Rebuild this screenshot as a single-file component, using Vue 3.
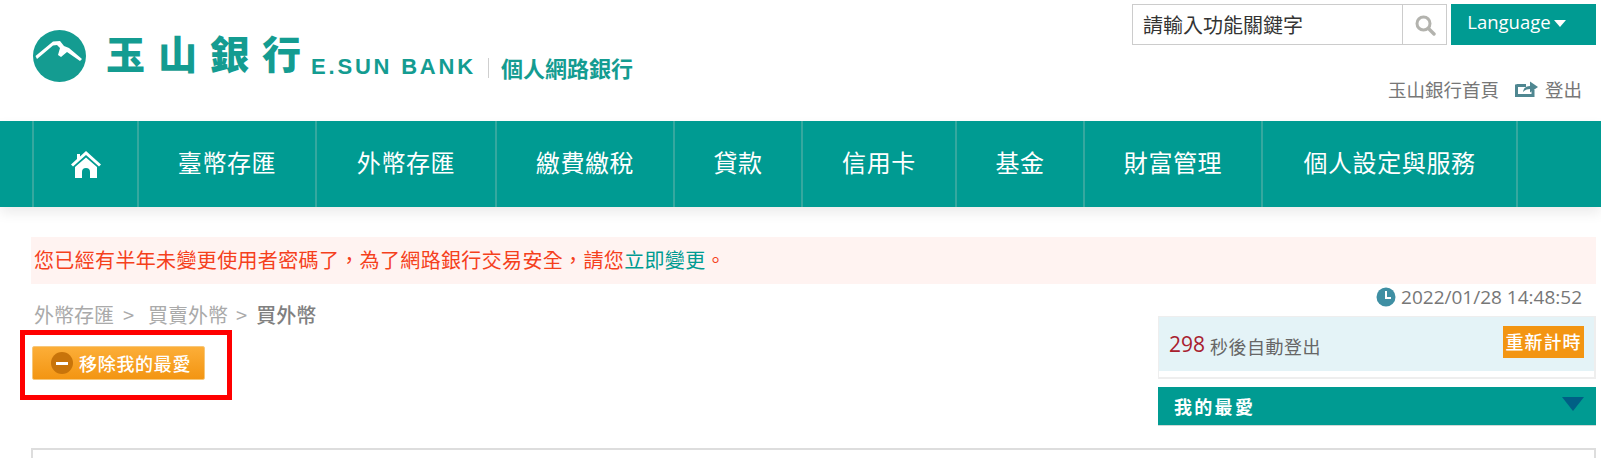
<script setup>
const navItems = [
  { label: '臺幣存匯', width: 178 },
  { label: '外幣存匯', width: 180 },
  { label: '繳費繳稅', width: 178 },
  { label: '貸款', width: 128 },
  { label: '信用卡', width: 154 },
  { label: '基金', width: 128 },
  { label: '財富管理', width: 178 },
  { label: '個人設定與服務', width: 255 },
];
</script>

<template>
  <div class="page">
    <header class="top">
      <div class="logo">
        <svg class="logo-mark" viewBox="0 0 53 52" width="53" height="52">
          <ellipse cx="26.5" cy="26" rx="26.5" ry="26" fill="#149c91" />
          <path d="M2.5 26 L20 11.5 L27 11 L31 16 L36 18 L49 29 L47 31 L34 22 L28 27 L25 25 L27 18 L24 15 L20 15.5 L4 29 Z" fill="#fff" />
        </svg>
        <span class="logo-zh">玉山銀行</span>
        <span class="logo-en">E.SUN BANK</span>
        <span class="logo-bar"></span>
        <span class="logo-sub">個人網路銀行</span>
      </div>
      <div class="tools">
        <div class="tools-row">
          <div class="search">
            <span class="search-text">請輸入功能關鍵字</span>
            <span class="search-btn">
              <svg viewBox="0 0 22 22" width="22" height="22">
                <circle cx="9.5" cy="9.5" r="6.5" fill="none" stroke="#b3b3ae" stroke-width="3" />
                <path d="M14.5 14.5 L20 20" stroke="#b3b3ae" stroke-width="3.4" stroke-linecap="round" />
              </svg>
            </span>
          </div>
          <div class="lang">Language<i class="lang-caret"></i></div>
        </div>
        <div class="links">
          <span>玉山銀行首頁</span>
          <svg class="logout-icon" viewBox="0 0 23 16" width="23" height="16">
            <path d="M1.5 4.5 H11 M1.5 3.5 V14.5 H18 V9" fill="none" stroke="#4f8791" stroke-width="3" />
            <path d="M8 11 C8.5 7 11 5 15 5 V0.5 L23 6 L15 11.5 V8 C12 8 10 9 8 11 Z" fill="#4f8791" />
          </svg>
          <span>登出</span>
        </div>
      </div>
    </header>

    <nav class="nav">
      <a class="nav-home">
        <svg viewBox="0 0 30 27" width="30" height="27">
          <path d="M15 0 L30 13.5 L28 15.5 L15 4 L2 15.5 L0 13.5 L6 8 V3 H9 V5.5 Z" fill="#fff" />
          <path d="M15 6.5 L26 16 V27 H19 V21 A4 4 0 0 0 11 21 V27 H4 V16 Z" fill="#fff" />
        </svg>
      </a>
      <a v-for="item in navItems" :key="item.label" class="nav-item" :style="{ width: item.width + 'px' }">{{ item.label }}</a>
    </nav>

    <div class="alert">您已經有半年未變更使用者密碼了，為了網路銀行交易安全，請您<span class="alert-link">立即變更</span>。</div>

    <div class="main">
      <div class="left">
        <div class="crumbs">
          <span>外幣存匯</span>
          <span class="sep sep-1">&gt;</span>
          <span>買賣外幣</span>
          <span class="sep sep-2">&gt;</span>
          <b>買外幣</b>
        </div>
        <div class="fav-wrap">
          <button class="fav-btn"><i class="minus"></i>移除我的最愛</button>
          <div class="mark"></div>
        </div>
      </div>
      <aside class="side">
        <div class="clock">
          <svg viewBox="0 0 20 20" width="20" height="20">
            <circle cx="10" cy="10" r="9.5" fill="#3f8fa3" />
            <path d="M10 4 V11 H15" fill="none" stroke="#fff" stroke-width="2" />
          </svg>
          2022/01/28 14:48:52
        </div>
        <div class="timer">
          <div class="timer-in">
            <span class="sec">298</span>
            <span class="sec-text">秒後自動登出</span>
            <span class="reset">重新計時</span>
          </div>
        </div>
        <div class="fav-bar">
          <span>我的最愛</span>
          <i class="tri"></i>
        </div>
      </aside>
    </div>
    <div class="content"></div>
  </div>
</template>

<style scoped>
.page {
  height: 458px;
  overflow: hidden;
  background: #fff;
  font-family: "Noto Sans CJK TC", "Liberation Sans", sans-serif;
  color: #666;
}

.top {
  display: flex;
  justify-content: space-between;
  height: 121px;
  padding: 4px 5px 0 33px;
  box-sizing: border-box;
}

.logo {
  display: flex;
  align-items: flex-start;
  padding-top: 26px;
  color: #149c91;
}

.logo-mark {
  flex: none;
  margin-right: 20px;
}

.logo-zh {
  font-size: 39px;
  line-height: 50px;
  font-weight: 900;
  letter-spacing: 13px;
  margin-top: -3px;
  margin-right: -3px;
}

.logo-en {
  font-family: "Liberation Sans", sans-serif;
  font-size: 22px;
  line-height: 24px;
  font-weight: 700;
  letter-spacing: 2.8px;
  margin-top: 25px;
}

.logo-bar {
  width: 1px;
  height: 20px;
  background: #cfcfcf;
  margin: 28px 12px 0 12px;
}

.logo-sub {
  font-size: 22px;
  line-height: 26px;
  font-weight: 700;
  margin-top: 24px;
}

.tools {
  width: 464px;
}

.tools-row {
  display: flex;
  gap: 4px;
}

.search {
  display: flex;
  width: 315px;
  height: 41px;
  border: 1px solid #ccc;
  box-sizing: border-box;
}

.search-text {
  flex: 1;
  padding-left: 10px;
  font-size: 20px;
  line-height: 39px;
  color: #333;
}

.search-btn {
  display: flex;
  align-items: center;
  justify-content: center;
  width: 43px;
  border-left: 1px solid #ccc;
}

.lang {
  display: flex;
  align-items: center;
  justify-content: center;
  width: 145px;
  height: 41px;
  padding: 0 14px 6px 0;
  box-sizing: border-box;
  background: #009b92;
  color: #fff;
  font-family: "Open Sans", sans-serif;
  font-size: 18.5px;
}

.lang-caret {
  width: 0;
  height: 0;
  margin: 4px 0 0 3px;
  border: 6.5px solid transparent;
  border-top: 7px solid #fff;
  border-bottom: 0;
}

.links {
  display: flex;
  justify-content: flex-end;
  align-items: center;
  height: 30px;
  margin-top: 29px;
  padding-right: 14px;
  font-size: 18.5px;
  color: #777;
}

.logout-icon {
  margin: 0 7px 0 16px;
}

.nav {
  display: flex;
  height: 86px;
  padding-left: 32px;
  background: #009b92;
  box-shadow: 0 6px 12px rgba(0, 0, 0, 0.08);
  color: #fff;
}

.nav a {
  display: flex;
  align-items: center;
  justify-content: center;
  box-sizing: border-box;
  border-right: 2px solid #35a89f;
}

.nav-home {
  width: 107px;
  border-left: 2px solid #35a89f;
}

.nav-item {
  font-size: 24px;
  letter-spacing: 0.6px;
  padding-bottom: 5px;
}

.alert {
  margin: 30px 5px 0 31px;
  height: 47px;
  padding-left: 3px;
  background: #fff3f1;
  color: #f5401c;
  font-size: 20px;
  letter-spacing: 0.35px;
  line-height: 45px;
}

.alert-link {
  color: #009b92;
}

.main {
  display: flex;
  justify-content: space-between;
  padding: 0 5px 0 34px;
}

.left {
  padding-top: 17px;
}

.crumbs {
  display: flex;
  font-size: 20px;
  line-height: 28px;
  color: #aaa;
}

.sep-1 {
  margin: 0 14px 0 9px;
}

.sep-2 {
  margin: 0 9px 0 8px;
}

.crumbs b {
  color: #808080;
  font-weight: 500;
}

.fav-wrap {
  position: relative;
  margin-top: 17px;
  margin-left: -2px;
}

.fav-btn {
  display: flex;
  align-items: center;
  width: 173px;
  height: 34px;
  padding: 0 0 0 18px;
  border: 1px solid #f7c77a;
  border-radius: 2px;
  background: linear-gradient(#fcae38, #f39512);
  color: #fff;
  font-family: inherit;
  font-size: 18px;
  font-weight: 500;
  letter-spacing: 0.7px;
}

.minus {
  position: relative;
  flex: none;
  width: 22px;
  height: 22px;
  margin-right: 6px;
  border-radius: 50%;
  background: #c8740a;
}

.minus::after {
  content: "";
  position: absolute;
  left: 5px;
  top: 9.5px;
  width: 12px;
  height: 3px;
  background: #fff;
}

.mark {
  position: absolute;
  left: -12px;
  top: -16px;
  width: 212px;
  height: 70px;
  box-sizing: border-box;
  border: 5px solid #f00;
}

.side {
  width: 438px;
  padding-top: 1px;
}

.clock {
  display: flex;
  align-items: center;
  justify-content: flex-end;
  gap: 5px;
  height: 24px;
  padding-right: 14px;
  font-family: "Open Sans", sans-serif;
  font-size: 19px;
  color: #777;
}

.timer {
  height: 63px;
  margin-top: 7px;
  box-sizing: border-box;
  border: 1px solid #eee;
  border-width: 1px 2px 2px 1px;
}

.timer-in {
  display: flex;
  align-items: center;
  height: 54px;
  padding: 0 10px;
  background: #e4f3f7;
}

.sec {
  font-family: "Open Sans", sans-serif;
  font-size: 21px;
  color: #a8202e;
  margin-right: 5px;
}

.sec-text {
  flex: 1;
  font-size: 18px;
  letter-spacing: 0.5px;
  color: #666;
  padding-top: 3px;
}

.reset {
  width: 81px;
  height: 32px;
  background: #f39512;
  color: #fff;
  font-size: 18px;
  font-weight: 500;
  line-height: 31px;
  text-align: center;
  letter-spacing: 1px;
  margin-top: -4px;
}

.fav-bar {
  display: flex;
  align-items: center;
  justify-content: space-between;
  height: 39px;
  margin-top: 8px;
  padding: 0 12px 0 16px;
  background: #009b92;
  border-bottom: 1px solid #cfd8d7;
  box-sizing: border-box;
  color: #fff;
  font-size: 18px;
  font-weight: 700;
  letter-spacing: 2.3px;
}

.tri {
  width: 0;
  height: 0;
  margin-bottom: 4px;
  border: 11px solid transparent;
  border-top: 14px solid #005f85;
  border-bottom: 0;
}

.content {
  margin: 22px 5px 0 31px;
  height: 60px;
  border: 2px solid #ddd;
}
</style>
